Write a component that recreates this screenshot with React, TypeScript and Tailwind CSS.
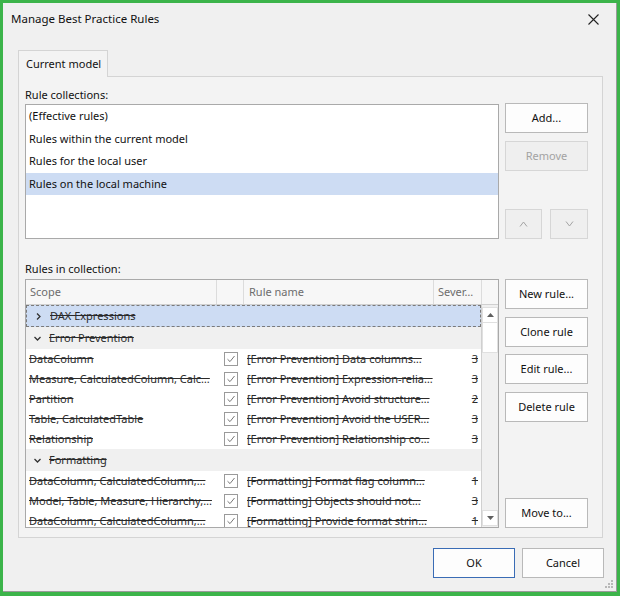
import React from "react";

type Row = [string, string, string];
type Group = { name: string; open: boolean; selected?: boolean; rows: Row[] };

const groups: Group[] = [
  { name: "DAX Expressions", open: false, selected: true, rows: [] },
  {
    name: "Error Prevention",
    open: true,
    rows: [
      ["DataColumn", "[Error Prevention] Data columns…", "3"],
      ["Measure, CalculatedColumn, Calc…", "[Error Prevention] Expression-relia…", "3"],
      ["Partition", "[Error Prevention] Avoid structure…", "2"],
      ["Table, CalculatedTable", "[Error Prevention] Avoid the USER…", "3"],
      ["Relationship", "[Error Prevention] Relationship co…", "3"],
    ],
  },
  {
    name: "Formatting",
    open: true,
    rows: [
      ["DataColumn, CalculatedColumn,…", "[Formatting] Format flag column…", "1"],
      ["Model, Table, Measure, Hierarchy,…", "[Formatting] Objects should not…", "3"],
      ["DataColumn, CalculatedColumn,…", "[Formatting] Provide format strin…", "1"],
    ],
  },
];

const collections = [
  "(Effective rules)",
  "Rules within the current model",
  "Rules for the local user",
  "Rules on the local machine",
];

function Btn({ label, disabled, className = "" }: { label: string; disabled?: boolean; className?: string }) {
  return (
    <div
      className={
        "flex h-[30px] items-center justify-center border " +
        (disabled ? "border-[#d6d6d6] bg-[#efefef] text-[#a3a3a3] " : "border-[#b9b9b9] bg-[#fdfdfd] text-[#111] ") +
        className
      }
    >
      {label}
    </div>
  );
}

function Chevron({ open }: { open: boolean }) {
  return (
    <svg width="9" height="9" viewBox="0 0 9 9" className="shrink-0">
      {open ? (
        <path d="M1.5 3 L4.5 6 L7.5 3" fill="none" stroke="#333" strokeWidth="1.3" />
      ) : (
        <path d="M3 1.5 L6 4.5 L3 7.5" fill="none" stroke="#333" strokeWidth="1.3" />
      )}
    </svg>
  );
}

function Check() {
  return (
    <div className="flex h-[14px] w-[14px] items-center justify-center border border-[#9a9a9a] bg-white">
      <svg width="10" height="10" viewBox="0 0 10 10">
        <path d="M1.5 5.2 L4 7.6 L8.5 2" fill="none" stroke="#777" strokeWidth="1" />
      </svg>
    </div>
  );
}

export default function App() {
  return (
    <div className="h-[596px] w-[620px] bg-[#3cb44a] pb-[4px] pl-[3px] pr-[3px] pt-[3px] font-['Noto_Sans',sans-serif] text-[11px]">
      <div className="relative flex h-[589px] w-[614px] flex-col border-b border-r border-[#9a9a9a] bg-[#f0f0f0]">
        {/* title bar */}
        <div className="flex h-[32px] items-center justify-between pl-[8px] pr-[17px]">
          <span className="text-[11.5px] text-[#111]">Manage Best Practice Rules</span>
          <svg width="11" height="11" viewBox="0 0 11 11">
            <path d="M0.5 0.5 L10.5 10.5 M10.5 0.5 L0.5 10.5" stroke="#222" strokeWidth="1.1" />
          </svg>
        </div>

        {/* tab */}
        <div className="ml-[15px] mt-[15px] flex">
          <div className="relative z-10 -mb-px flex h-[27px] w-[90px] items-center whitespace-nowrap border border-b-0 border-[#d4d4d4] bg-[#f3f3f3] pl-[7px] text-[#111]">
            Current model
          </div>
        </div>

        {/* panel */}
        <div className="ml-[15px] flex h-[462px] w-[585px] flex-col border border-[#d4d4d4] bg-[#f3f3f3] pb-[9px] pl-[6px] pr-[14px] pt-[10px] text-[#111]">
          <div className="mb-px h-[16px] leading-[16px]">Rule collections:</div>
          <div className="flex gap-[6px]">
            <div className="h-[135px] w-[474px] border border-[#a9a9a9] bg-white">
              {collections.map((c, i) => (
                <div
                  key={c}
                  className={"flex h-[22.5px] items-center pl-[3px] " + (i === 3 ? "bg-[#cddcf3]" : "")}
                >
                  {c}
                </div>
              ))}
            </div>
            <div className="flex h-[135px] w-[83px] flex-col">
              <Btn label="Add..." className="-mt-px" />
              <Btn label="Remove" disabled className="mt-[8px]" />
              <div className="mt-auto flex gap-[8px]">
                <div className="flex h-[30px] w-[37px] items-center justify-center border border-[#d6d6d6] bg-[#efefef]">
                  <svg width="9" height="6" viewBox="0 0 9 6">
                    <path d="M1 5.5 L4.5 1 L8 5.5" fill="none" stroke="#a3a3a3" strokeWidth="1" />
                  </svg>
                </div>
                <div className="flex h-[30px] w-[38px] items-center justify-center border border-[#d6d6d6] bg-[#efefef]">
                  <svg width="9" height="6" viewBox="0 0 9 6">
                    <path d="M1 0.5 L4.5 5 L8 0.5" fill="none" stroke="#a3a3a3" strokeWidth="1" />
                  </svg>
                </div>
              </div>
            </div>
          </div>

          <div className="mb-[2px] mt-[22px] h-[16px] leading-[16px]">Rules in collection:</div>
          <div className="flex gap-[6px]">
            {/* grid */}
            <div className="flex h-[249px] w-[474px] flex-col border border-[#a9a9a9] bg-[#f0f0f0]">
              <div className="flex h-[25px] shrink-0 border-b border-[#d0d0d0] bg-[#f7f7f7] text-[#6d6d6d]">
                <div className="flex w-[191px] items-center border-r border-[#dcdcdc] pl-[4px]">Scope</div>
                <div className="w-[27px] border-r border-[#dcdcdc]" />
                <div className="flex w-[190px] items-center border-r border-[#dcdcdc] pl-[5px]">Rule name</div>
                <div className="flex w-[48px] items-center border-r border-[#dcdcdc] pl-[4px]">Sever…</div>
                <div className="w-[16px]" />
              </div>
              <div className="flex min-h-0 flex-1">
                <div className="w-[455px] overflow-hidden text-[#2a2a2a]">
                  {groups.map((g) => (
                    <div key={g.name}>
                      <div
                        className={
                          "flex h-[22px] items-center gap-[7px] pl-[7px] " +
                          (g.selected ? "border border-dashed border-[#7a7a7a] bg-[#cddcf3]" : "bg-[#f0f0f0]")
                        }
                      >
                        <Chevron open={g.open} />
                        <span className="line-through">{g.name}</span>
                      </div>
                      {g.rows.map((r, i) => (
                        <div key={i} className="flex h-[20px] items-center bg-white leading-[12px]">
                          <div className="w-[191px] whitespace-nowrap pl-[3px] line-through">{r[0]}</div>
                          <div className="flex w-[27px] justify-center">
                            <Check />
                          </div>
                          <div className="w-[190px] whitespace-nowrap pl-[3px] line-through">{r[1]}</div>
                          <div className="w-[47px] pr-[3px] text-right line-through">{r[2]}</div>
                        </div>
                      ))}
                    </div>
                  ))}
                </div>
                {/* scrollbar */}
                <div className="flex w-[17px] flex-col border-l border-[#d0d0d0] bg-[#f0f0f0]">
                  <div className="mt-[2px] flex h-[16px] items-center justify-center border border-[#e0e0e0] bg-white">
                    <svg width="7" height="4" viewBox="0 0 7 4">
                      <path d="M0 4 L3.5 0 L7 4 Z" fill="#606060" />
                    </svg>
                  </div>
                  <div className="h-[30px] border border-t-0 border-[#e0e0e0] bg-white" />
                  <div className="mt-auto mb-[1px] flex h-[16px] items-center justify-center border border-[#e0e0e0] bg-white">
                    <svg width="7" height="4" viewBox="0 0 7 4">
                      <path d="M0 0 L3.5 4 L7 0 Z" fill="#606060" />
                    </svg>
                  </div>
                </div>
              </div>
            </div>
            <div className="flex h-[249px] w-[83px] flex-col">
              <Btn label="New rule..." />
              <Btn label="Clone rule" className="mt-[8px]" />
              <Btn label="Edit rule..." className="mt-[7px]" />
              <Btn label="Delete rule" className="mt-[8px]" />
              <Btn label="Move to..." className="mt-auto" />
            </div>
          </div>
        </div>

        {/* footer */}
        <div className="mr-[12px] mt-[10px] flex justify-end gap-[7px]">
          <div className="flex h-[30px] w-[82px] items-center justify-center border-[1.5px] border-[#3a6cb5] bg-[#fdfdfd] text-[#111]">
            OK
          </div>
          <div className="flex h-[30px] w-[82px] items-center justify-center border border-[#b9b9b9] bg-[#fdfdfd] text-[#111]">
            Cancel
          </div>
        </div>

        {/* size grip */}
        <svg width="10" height="10" viewBox="0 0 10 10" className="absolute bottom-[2px] right-[2px]">
          <rect x="7" y="1" width="2" height="2" fill="#b8b8b8" />
          <rect x="4" y="4" width="2" height="2" fill="#b8b8b8" />
          <rect x="7" y="4" width="2" height="2" fill="#b8b8b8" />
          <rect x="1" y="7" width="2" height="2" fill="#b8b8b8" />
          <rect x="4" y="7" width="2" height="2" fill="#b8b8b8" />
          <rect x="7" y="7" width="2" height="2" fill="#b8b8b8" />
        </svg>
      </div>
    </div>
  );
}
